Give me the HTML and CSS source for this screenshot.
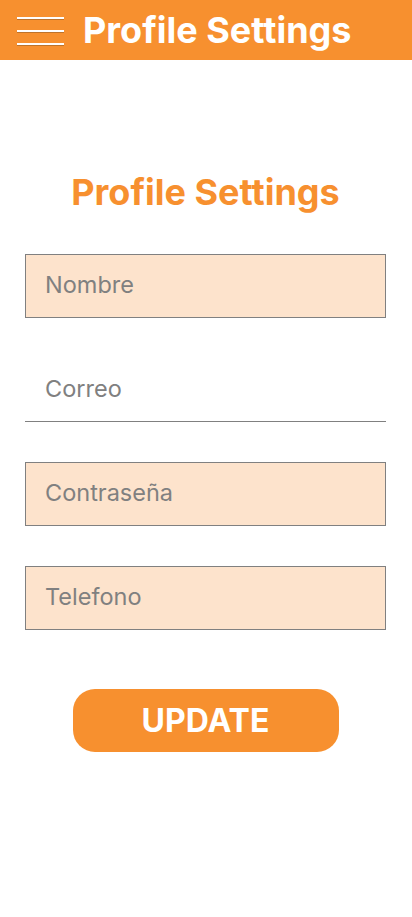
FILE: index.html
```html
<!DOCTYPE html>
<html lang="es">
<head>
<meta charset="utf-8">
<title>Profile Settings</title>
<link rel="stylesheet" href="styles.css">
</head>
<body>
<header class="topbar">
  <div class="menu" aria-label="menu">
    <span class="menu-line"></span>
    <span class="menu-line"></span>
    <span class="menu-line"></span>
  </div>
  <h1 class="topbar-title">Profile Settings</h1>
</header>
<main class="content">
  <h2 class="heading">Profile Settings</h2>
  <form class="form">
    <input class="field filled" type="text" placeholder="Nombre">
    <input class="field underline" type="email" placeholder="Correo">
    <input class="field filled" type="password" placeholder="Contraseña">
    <input class="field filled" type="tel" placeholder="Telefono">
    <button class="update" type="button">UPDATE</button>
  </form>
</main>
</body>
</html>
```
FILE: styles.css
```css
* { box-sizing: border-box; }
body {
  margin: 0;
  background: #ffffff;
  font-family: Inter, "Noto Sans", sans-serif;
}
.topbar {
  height: 60px;
  background: #f7902f;
  display: flex;
  align-items: center;
  padding-left: 17px;
  gap: 19px;
}
.menu {
  width: 47px;
  display: flex;
  flex-direction: column;
  gap: 11px;
  padding-top: 2px;
}
.menu-line {
  display: block;
  height: 2px;
  background: #ffffff;
  box-shadow: 0 1px 0 rgba(120, 80, 40, 0.45);
}
.topbar-title {
  margin: 0;
  color: #ffffff;
  font-size: 36px;
  font-weight: 700;
  line-height: 1;
  padding-bottom: 1px;
}
.content {
  padding: 108px 26px 0 25px;
  display: flex;
  flex-direction: column;
  align-items: stretch;
}
.heading {
  margin: 0;
  text-align: center;
  color: #f7902f;
  font-size: 36px;
  font-weight: 700;
  line-height: 48px;
}
.form {
  margin-top: 38px;
  display: flex;
  flex-direction: column;
  gap: 40px;
}
.field {
  height: 64px;
  width: 100%;
  padding: 0 18px 3px 19px;
  font-family: Inter, "Noto Sans", sans-serif;
  font-size: 23.5px;
  color: #808080;
  outline: none;
}
.field::placeholder { color: #808080; opacity: 1; }
.filled {
  background: #fde3cc;
  border: 1px solid #808080;
}
.underline {
  background: transparent;
  border: none;
  border-bottom: 1px solid #808080;
  padding-left: 20px;
}
.update {
  align-self: center;
  margin-top: 19px;
  width: 266px;
  height: 63px;
  border: none;
  border-radius: 22px;
  background: #f7902f;
  color: #ffffff;
  font-family: Inter, "Noto Sans", sans-serif;
  font-size: 32px;
  font-weight: 700;
}
```
